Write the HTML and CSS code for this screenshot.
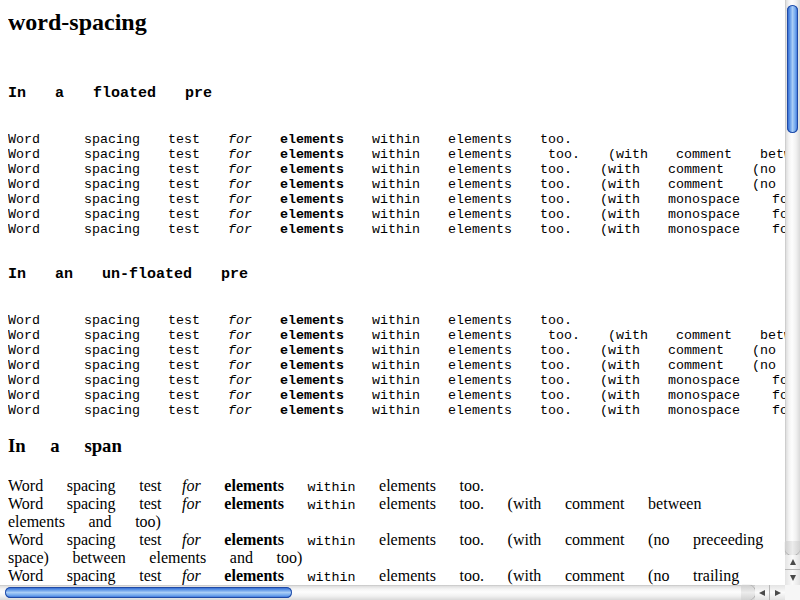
FILE: index.html
```html
<!DOCTYPE html>
<html>
<head>
<meta charset="utf-8">
<title>word-spacing</title>
<link rel="stylesheet" href="styles.css">
</head>
<body>
<h2 class="title">word-spacing</h2>

<h4 class="mono-head head-floated">In a floated pre</h4>
<pre class="sample pre-floated"><span class="tight">Word  </span> spacing test <em>for</em> <b>elements</b> within elements too.
<span class="tight">Word  </span> spacing test <em>for</em> <b>elements</b> within elements<span class="tight"> </span> too. (with comment between elements and too)
<span class="tight">Word  </span> spacing test <em>for</em> <b>elements</b> within elements too. (with comment (no preceeding space) between elements and too)
<span class="tight">Word  </span> spacing test <em>for</em> <b>elements</b> within elements too. (with comment (no trailing space) between elements and too)
<span class="tight">Word  </span> spacing test <em>for</em> <b>elements</b> within elements too. (with monospace<span class="nudge"></span> font from Word to elements)
<span class="tight">Word  </span> spacing test <em>for</em> <b>elements</b> within elements too. (with monospace<span class="nudge"></span> font from Word to within)
<span class="tight">Word  </span> spacing test <em>for</em> <b>elements</b> within elements too. (with monospace<span class="nudge"></span> font from Word to too)</pre>

<h4 class="mono-head head-unfloated">In an un-floated pre</h4>
<pre class="sample pre-unfloated"><span class="tight">Word  </span> spacing test <em>for</em> <b>elements</b> within elements too.
<span class="tight">Word  </span> spacing test <em>for</em> <b>elements</b> within elements<span class="tight"> </span> too. (with comment between elements and too)
<span class="tight">Word  </span> spacing test <em>for</em> <b>elements</b> within elements too. (with comment (no preceeding space) between elements and too)
<span class="tight">Word  </span> spacing test <em>for</em> <b>elements</b> within elements too. (with comment (no trailing space) between elements and too)
<span class="tight">Word  </span> spacing test <em>for</em> <b>elements</b> within elements too. (with monospace<span class="nudge"></span> font from Word to elements)
<span class="tight">Word  </span> spacing test <em>for</em> <b>elements</b> within elements too. (with monospace<span class="nudge"></span> font from Word to within)
<span class="tight">Word  </span> spacing test <em>for</em> <b>elements</b> within elements too. (with monospace<span class="nudge"></span> font from Word to too)</pre>

<h3 class="span-head">In a span</h3>
<div class="span-block"><span class="spaced">Word spacing test <em>for</em> <strong>elements</strong> <code>within</code> elements too.<br>Word spacing test <em>for</em> <strong>elements</strong> <code>within</code> elements too. (with comment between elements and too)<br>Word spacing test <em>for</em> <strong>elements</strong> <code>within</code> elements too. (with comment (no preceeding space) between elements and too)<br>Word spacing test <em>for</em> <strong>elements</strong> <code>within</code> elements too. (with comment (no trailing space) between elements and too)<br>Word spacing test <em>for</em> <strong>elements</strong> <code>within</code> elements too. (with monospace font from Word to elements)<br>Word spacing test <em>for</em> <strong>elements</strong> <code>within</code> elements too. (with monospace font from Word to within)</span></div>

<div class="vscroll">
  <div class="vthumb"></div>
  <div class="vcap"></div>
  <div class="vbtn vbtn-up"><span class="tri tri-up"></span></div>
  <div class="vbtn vbtn-down"><span class="tri tri-down"></span></div>
</div>
<div class="hscroll">
  <div class="hthumb"></div>
  <div class="hcap"></div>
  <div class="hbtn hbtn-left"><span class="tri tri-left"></span></div>
  <div class="hbtn hbtn-right"><span class="tri tri-right"></span></div>
</div>
<div class="scroll-corner"></div>
</body>
</html>
```

FILE: styles.css
```css
html {
  overflow: hidden;
  background: #fff;
}

body {
  margin: 8px;
  font-family: "Liberation Serif", "Times New Roman", serif;
  font-size: 16px;
  color: #000;
}

.title {
  margin: 0;
  font-size: 24px;
  line-height: 28px;
  font-weight: bold;
}

.mono-head {
  font-family: "Liberation Mono", "Courier New", monospace;
  font-size: 15px;
  line-height: 17px;
  font-weight: bold;
  word-spacing: 20px;
  margin: 0;
}

.head-floated {
  margin-top: 49px;
}

.head-unfloated {
  margin-top: 29px;
}

.sample {
  font-family: "Liberation Mono", "Courier New", monospace;
  font-size: 13.3333px;
  line-height: 15px;
  word-spacing: 20px;
  white-space: pre;
  margin: 30px 0 0 0;
  overflow: visible;
}

.sample b {
  font-weight: bold;
}

.tight {
  word-spacing: 0;
}

.nudge {
  display: inline-block;
  width: 4px;
}

.span-head {
  font-size: 18.72px;
  line-height: 22px;
  font-weight: bold;
  word-spacing: 20px;
  margin: 17px 0 0 0;
}

.span-block {
  width: 769px;
  margin-top: 20px;
  line-height: 18px;
}

.spaced {
  word-spacing: 19.6px;
}

.spaced em {
  margin-left: -3px;
}

.spaced code {
  font-family: "Liberation Mono", "Courier New", monospace;
  font-size: 13.3333px;
  line-height: 12px;
}

/* Fake Aqua-style scrollbars overlaying the viewport edges */
.vscroll {
  position: fixed;
  top: 0;
  right: 0;
  width: 15px;
  height: 585px;
  background: linear-gradient(to right, #bdbdbd 0, #dedede 1px, #f4f4f4 4px, #fdfdfd 7px, #f1f1f1 11px, #d9d9d9 15px);
}

.vthumb {
  position: absolute;
  top: 5px;
  left: 2px;
  width: 11px;
  height: 128px;
  border-radius: 6px;
  background: linear-gradient(to right, #2359c9 0, #5d95e6 25%, #a9cdf6 50%, #72a8ee 75%, #2c62cf 100%);
  box-shadow: inset 0 0 0 1px #1f4aa6;
}

.vcap {
  position: absolute;
  left: 0;
  right: 0;
  bottom: 30px;
  height: 14px;
  border-radius: 0 0 7px 7px;
  background: linear-gradient(to right, #cfcfcf, #ececec 50%, #d2d2d2);
  box-shadow: 0 1px 1px #9c9c9c;
}

.vbtn {
  position: absolute;
  left: 0;
  width: 15px;
  height: 15px;
  display: flex;
  align-items: center;
  justify-content: center;
  background: linear-gradient(to right, #e4e4e4, #fafafa 50%, #e2e2e2);
}

.vbtn-up {
  bottom: 15px;
  border-bottom: 1px solid #b7b7b7;
  height: 14px;
}

.vbtn-down {
  bottom: 0;
}

.hscroll {
  position: fixed;
  left: 0;
  bottom: 0;
  width: 785px;
  height: 15px;
  background: linear-gradient(to bottom, #bdbdbd 0, #dedede 1px, #f4f4f4 4px, #fdfdfd 7px, #f1f1f1 11px, #d9d9d9 15px);
}

.hthumb {
  position: absolute;
  left: 5px;
  top: 2px;
  width: 287px;
  height: 11px;
  border-radius: 6px;
  background: linear-gradient(to bottom, #2359c9 0, #5d95e6 25%, #a9cdf6 50%, #72a8ee 75%, #2c62cf 100%);
  box-shadow: inset 0 0 0 1px #1f4aa6;
}

.hcap {
  position: absolute;
  top: 0;
  bottom: 0;
  right: 30px;
  width: 14px;
  border-radius: 0 7px 7px 0;
  background: linear-gradient(to bottom, #cfcfcf, #ececec 50%, #d2d2d2);
  box-shadow: 1px 0 1px #9c9c9c;
}

.hbtn {
  position: absolute;
  top: 0;
  width: 15px;
  height: 15px;
  display: flex;
  align-items: center;
  justify-content: center;
  background: linear-gradient(to bottom, #e4e4e4, #fafafa 50%, #e2e2e2);
}

.hbtn-left {
  right: 15px;
  border-right: 1px solid #b7b7b7;
  width: 14px;
}

.hbtn-right {
  right: 0;
}

.scroll-corner {
  position: fixed;
  right: 0;
  bottom: 0;
  width: 15px;
  height: 15px;
  background: #f6f6f6;
}

.tri {
  display: block;
  width: 0;
  height: 0;
}

.tri-up {
  border-left: 3.5px solid transparent;
  border-right: 3.5px solid transparent;
  border-bottom: 6px solid #4a4a4a;
}

.tri-down {
  border-left: 3.5px solid transparent;
  border-right: 3.5px solid transparent;
  border-top: 6px solid #4a4a4a;
}

.tri-left {
  border-top: 3.5px solid transparent;
  border-bottom: 3.5px solid transparent;
  border-right: 6px solid #4a4a4a;
}

.tri-right {
  border-top: 3.5px solid transparent;
  border-bottom: 3.5px solid transparent;
  border-left: 6px solid #4a4a4a;
}
```
